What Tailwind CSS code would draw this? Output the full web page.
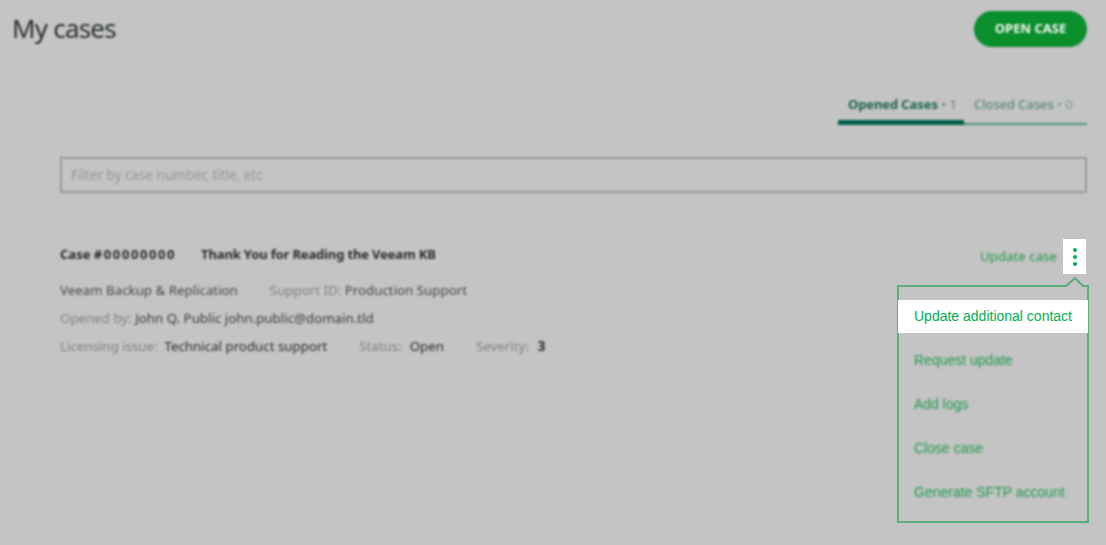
<!DOCTYPE html>
<html lang="en">
  <head>
    <meta charset="UTF-8" />
    <meta name="viewport" content="width=device-width, initial-scale=1.0" />
    <title>My cases</title>
    <script src="https://cdn.jsdelivr.net/npm/@tailwindcss/browser@4"></script>
  </head>
  <body class="bg-[#c4c4c4] font-['Noto_Sans','Open_Sans',sans-serif]">
    <div class="w-[1106px] h-[545px] overflow-hidden pl-3 pr-[19px]">
      <!-- Header -->
      <header class="flex justify-between items-start pt-[11px] blur-[0.8px]">
        <h1 class="text-[26px] leading-[34px] text-[#2a2f32] tracking-[-0.8px]">My cases</h1>
        <button class="w-[113px] h-9 rounded-full bg-[#0a8f2d] text-[#f0f5f0] text-[13px] font-bold">OPEN CASE</button>
      </header>

      <!-- Tabs -->
      <div class="flex justify-end mt-[46px] blur-[0.8px]">
        <div class="flex w-[249px] h-[32px] border-b-2 border-[#4f8f7a] text-[13px] leading-5">
          <div class="w-[126px] h-[32px] border-b-[5px] border-[#005f4b] pl-[10px] pt-[1px] text-[#1f6453] whitespace-nowrap">
            <span class="font-bold tracking-[-0.1px]">Opened Cases</span> <span class="text-[#5f8378]">• 1</span>
          </div>
          <div class="pl-[10px] pt-[1px] text-[#4a8172] whitespace-nowrap">Closed Cases <span class="text-[#7c9a90]">• 0</span></div>
        </div>
      </div>

      <div class="ml-12">
        <!-- Filter -->
        <div class="mt-[32px] h-9 border-2 border-[#999] flex items-center pl-[9px] text-[13.5px] text-[#969696] blur-[0.8px]">
          Filter by case number, title, etc
        </div>

        <!-- Case -->
        <div class="relative mt-[47px] text-[13.3px] text-[#484848]">
          <div class="blur-[0.8px]">
            <div class="flex gap-[25px] h-[30px] items-center font-bold text-[13px] text-[#2b2b2b]">
              <span>Case <span class="tracking-[1.6px]">#00000000</span></span>
              <span class="tracking-[-0.15px]">Thank You for Reading the Veeam KB</span>
            </div>
            <div class="flex gap-8 h-7 items-center mt-[7px]">
              <span>Veeam Backup &amp; Replication</span>
              <span><span class="text-[#828282]">Support ID:</span> Production Support</span>
            </div>
            <div class="flex h-7 items-center">
              <span><span class="text-[#828282]">Opened by:</span> <span class="text-[#3c3c3c]">John Q. Public john.public@domain.tld</span></span>
            </div>
            <div class="flex gap-8 h-7 items-center text-[#2b2b2b]">
              <span><span class="text-[#828282]">Licensing issue:</span>&nbsp; Technical product support</span>
              <span><span class="text-[#828282]">Status:</span>&nbsp;&nbsp;<span class="ml-px">Open</span></span>
              <span><span class="text-[#828282]">Severity:</span>&nbsp;&nbsp;<span class="font-bold ml-[2px]">3</span></span>
            </div>
          </div>

          <!-- Update case + menu toggle -->
          <div class="absolute right-px top-[-1px] flex items-center">
            <span class="text-[#1f9a4e] text-[13.3px] mr-[6px] blur-[0.8px]">Update case</span>
            <button class="w-[23px] h-[35px] bg-white flex flex-col items-center justify-center gap-[3px]">
              <span class="w-1 h-1 rounded-full bg-[#00b050]"></span>
              <span class="w-1 h-1 rounded-full bg-[#00b050]"></span>
              <span class="w-1 h-1 rounded-full bg-[#00b050]"></span>
            </button>
          </div>

          <!-- Dropdown menu -->
          <div class="absolute left-[837px] top-[37px] w-[192px] h-[246px] font-['Liberation_Sans',Arial,sans-serif] text-sm">
            <svg class="absolute inset-0 blur-[0.5px]" width="192" height="246" viewBox="0 0 192 246" fill="none">
              <path d="M1 9H169L178 1L186 9H191V245H1Z" stroke="#58ae76" stroke-width="2" />
            </svg>
            <ul class="absolute left-px right-px top-[23px]">
              <li class="h-[33px] mb-[11px] pb-[2px] bg-white text-[#00b050] pl-4 flex items-center">Update additional contact</li>
              <li class="h-[33px] mb-[11px] pb-[2px] text-[#1f9a4e] pl-4 flex items-center blur-[0.8px]">Request update</li>
              <li class="h-[33px] mb-[11px] pb-[2px] text-[#1f9a4e] pl-4 flex items-center blur-[0.8px]">Add logs</li>
              <li class="h-[33px] mb-[11px] pb-[2px] text-[#1f9a4e] pl-4 flex items-center blur-[0.8px]">Close case</li>
              <li class="h-[33px] pb-[2px] text-[#1f9a4e] pl-4 flex items-center blur-[0.8px]">Generate SFTP account</li>
            </ul>
          </div>
        </div>
      </div>
    </div>
  </body>
</html>
